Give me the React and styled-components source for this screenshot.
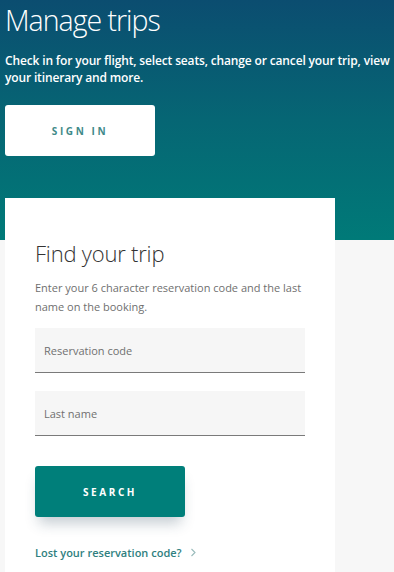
import React from "react"
import styled, { createGlobalStyle } from "styled-components"

const GlobalStyle = createGlobalStyle`
  html, body {
    margin: 0;
    padding: 0;
    background: #f7f7f7;
    font-family: "Open Sans", "Noto Sans", sans-serif;
  }
`

const Page = styled.div`
  width: 394px;
  min-height: 572px;
  overflow: hidden;
`

const Hero = styled.header`
  height: 240px;
  box-sizing: border-box;
  padding: 0 0 0 5px;
  background: linear-gradient(180deg, #0b4d70 0%, #066674 50%, #007a78 100%);
  color: #fff;
`

const Title = styled.h1`
  margin: 0;
  padding-top: 2px;
  font-size: 28.5px;
  line-height: 37px;
  font-weight: 300;
  letter-spacing: -1px;
`

const Intro = styled.p`
  margin: 13px 0 0;
  font-size: 12px;
  line-height: 17px;
  font-weight: 600;
  letter-spacing: -0.15px;
`

const Button = styled.button`
  display: flex;
  align-items: center;
  justify-content: center;
  width: 150px;
  height: 51px;
  border: 0;
  border-radius: 3px;
  padding: 0;
  font-family: inherit;
  font-size: 10px;
  font-weight: 700;
  letter-spacing: 2.6px;
  background: ${p => (p.primary ? "#007f7a" : "#ffffff")};
  color: ${p => (p.primary ? "#ffffff" : "#3f8a89")};
  box-shadow: ${p => (p.primary ? "0 10px 14px -4px rgba(40, 70, 90, 0.28)" : "none")};
  cursor: pointer;
`

const SignIn = styled(Button)`
  margin-top: 19px;
`

const Card = styled.section`
  margin: -42px 0 0 5px;
  width: 330px;
  box-sizing: border-box;
  padding: 40px 30px 20px;
  background: #fff;
  min-height: 380px;
`

const CardTitle = styled.h2`
  margin: 0;
  font-size: 22px;
  line-height: 30px;
  font-weight: 300;
  color: #333;
  letter-spacing: -0.2px;
`

const Help = styled.p`
  margin: 10px 0 0;
  font-size: 11px;
  line-height: 19px;
  color: #6f6f6f;
`

const Field = styled.label`
  display: flex;
  align-items: center;
  box-sizing: border-box;
  width: 270px;
  height: 45px;
  margin-top: ${p => p.gap}px;
  padding: 0 9px;
  background: #f6f6f6;
  border-bottom: 1.5px solid #7a7a7a;
  font-size: 11px;
  color: #707070;
`

const SearchButton = styled(Button)`
  margin-top: 30px;
`

const Link = styled.a`
  display: flex;
  align-items: center;
  gap: 8px;
  margin-top: 28px;
  font-size: 11px;
  font-weight: 600;
  color: #2f7f80;
  text-decoration: none;
`

const Chevron = styled.svg`
  width: 7px;
  height: 9px;
`

export default function App() {
  return (
    <Page>
      <GlobalStyle />
      <Hero>
        <Title>Manage trips</Title>
        <Intro>Check in for your flight, select seats, change or cancel your trip, view your itinerary and more.</Intro>
        <SignIn>SIGN IN</SignIn>
      </Hero>
      <Card>
        <CardTitle>Find your trip</CardTitle>
        <Help>Enter your 6 character reservation code and the last name on the booking.</Help>
        <Field gap={12}>Reservation code</Field>
        <Field gap={18}>Last name</Field>
        <SearchButton primary>SEARCH</SearchButton>
        <Link href="#">
          Lost your reservation code?
          <Chevron viewBox="0 0 7 9">
            <path d="M1.5 1 L5 4.5 L1.5 8" fill="none" stroke="#9bb" strokeWidth="1.1" />
          </Chevron>
        </Link>
      </Card>
    </Page>
  )
}
